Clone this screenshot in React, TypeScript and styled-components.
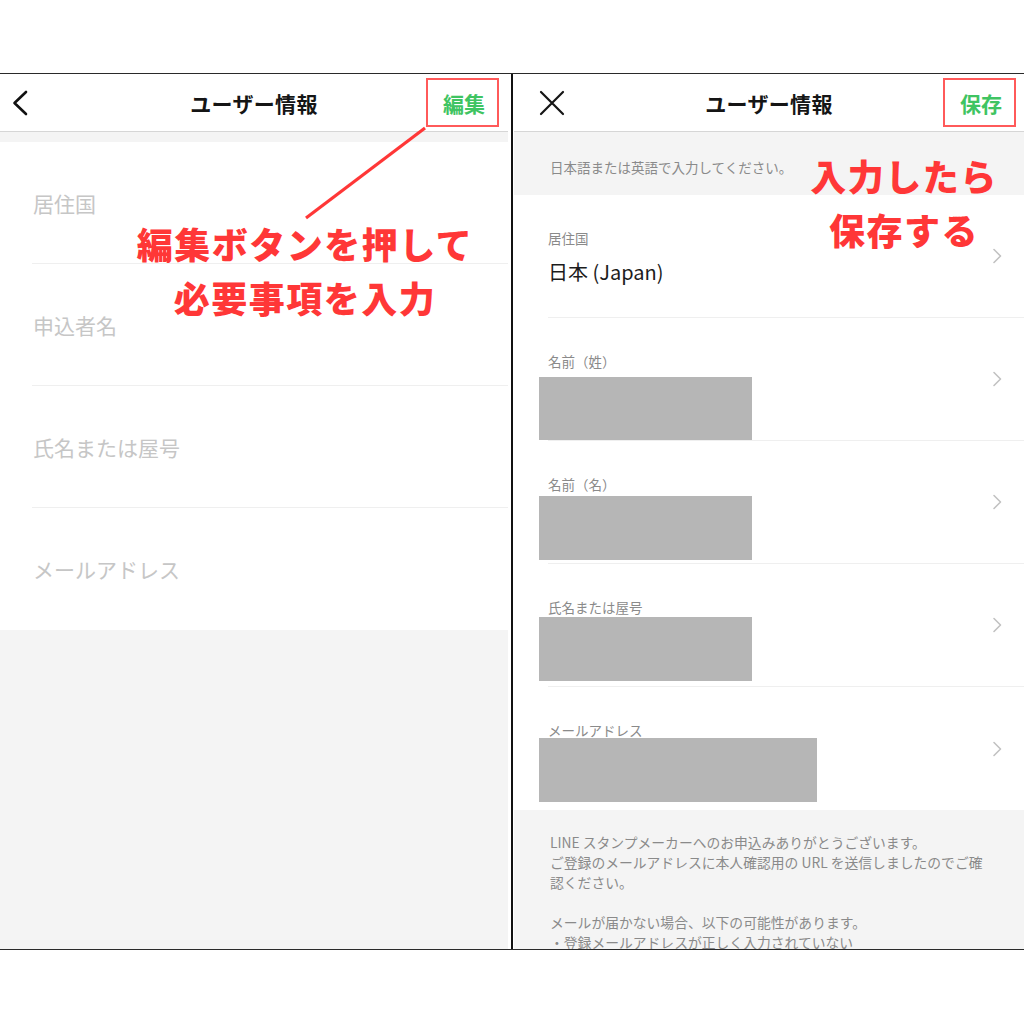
import React from 'react';
import styled, { createGlobalStyle } from 'styled-components';

const GlobalStyle = createGlobalStyle`
  html, body {
    margin: 0;
    padding: 0;
    background: #ffffff;
  }
  body {
    font-family: "Noto Sans CJK JP", "Noto Sans", sans-serif;
    color: #1a1a1a;
  }
`;

const Stage = styled.div`
  position: relative;
  width: 1024px;
  height: 1024px;
  padding-top: 73px;
  box-sizing: border-box;
  overflow: hidden;
`;

const Frame = styled.div`
  display: flex;
  height: 877px;
  box-sizing: border-box;
  border-top: 1px solid #2a2a2a;
  border-bottom: 1px solid #2a2a2a;
`;

const Panel = styled.div<{ $width: number }>`
  display: flex;
  flex-direction: column;
  width: ${(p) => p.$width}px;
  flex-shrink: 0;
  background: #f4f4f4;
  overflow: hidden;

  & > * {
    flex-shrink: 0;
  }
`;

const Divider = styled.div`
  width: 2px;
  margin: 0 1px 0 3px;
  background: #111111;
  flex-shrink: 0;
`;

const Header = styled.div<{ $pad: number }>`
  display: grid;
  grid-template-columns: 1fr auto 1fr;
  align-items: center;
  height: 58px;
  box-sizing: border-box;
  padding: 0 ${(p) => p.$pad}px;
  background: #ffffff;
  border-bottom: 1px solid #d6d6d6;
`;

const IconSlot = styled.div<{ $inset: number }>`
  display: flex;
  align-items: center;
  justify-self: start;
  margin-left: ${(p) => p.$inset}px;
`;

const Title = styled.div`
  font-size: 21px;
  font-weight: 700;
  color: #151515;
  letter-spacing: 0.3px;
`;

const Action = styled.div`
  justify-self: end;
  display: flex;
  align-items: center;
  height: 49px;
  box-sizing: border-box;
  padding: 0 12px 0 15px;
  border: 2px solid #ff5a5a;
  color: #3fc462;
  font-size: 21px;
  font-weight: 700;
`;

const Spacer = styled.div<{ $height: number }>`
  height: ${(p) => p.$height}px;
`;

const Note = styled.div`
  height: 63px;
  box-sizing: border-box;
  padding: 27px 0 0 36px;
  font-size: 13.5px;
  line-height: 16px;
  color: #8a8a8a;
`;

const PlainList = styled.div`
  background: #ffffff;
`;

const PlainRow = styled.div<{ $last?: boolean }>`
  display: flex;
  align-items: center;
  height: 122px;
  box-sizing: border-box;
  margin-left: 32px;
  padding-left: 1px;
  border-bottom: ${(p) => (p.$last ? 'none' : '1px solid #efefef')};
  font-size: 21px;
  color: #c6c6c6;
`;

const FieldList = styled.div`
  background: #ffffff;
`;

const FieldRow = styled.div<{ $last?: boolean }>`
  display: flex;
  height: 123px;
  box-sizing: border-box;
  margin-left: 34px;
  border-bottom: ${(p) => (p.$last ? 'none' : '1px solid #efefef')};
`;

const FieldBody = styled.div`
  flex: 1;
  display: flex;
  flex-direction: column;
  align-items: flex-start;
  padding-top: 35px;
`;

const FieldLabel = styled.div`
  font-size: 13.5px;
  line-height: 16px;
  color: #8a8a8a;
`;

const FieldValue = styled.div`
  margin-top: 14px;
  font-size: 20px;
  line-height: 24px;
  color: #1c1c1c;
`;

const Redacted = styled.div<{ $offset: number; $width: number }>`
  margin: ${(p) => p.$offset}px 0 0 -9px;
  width: ${(p) => p.$width}px;
  height: 64px;
  background: #b6b6b6;
`;

const ChevronSlot = styled.div`
  display: flex;
  align-items: center;
  padding-right: 22px;
`;

const Footer = styled.div`
  padding: 22px 0 0 36px;
  font-size: 13.8px;
  line-height: 20px;
  color: #8a8a8a;
  white-space: nowrap;
`;

const FooterLine = styled.div<{ $gap?: boolean }>`
  margin-top: ${(p) => (p.$gap ? '20px' : '0')};
`;

const Callout = styled.div<{ $left: number; $top: number; $width: number }>`
  position: absolute;
  left: ${(p) => p.$left}px;
  top: ${(p) => p.$top}px;
  width: ${(p) => p.$width}px;
  text-align: center;
  font-size: 36px;
  line-height: 54px;
  font-weight: 900;
  letter-spacing: 1.5px;
  color: #ff3737;
  white-space: nowrap;
`;

const Overlay = styled.svg`
  position: absolute;
  left: 0;
  top: 0;
  pointer-events: none;
`;

const BackIcon = () => (
  <svg width="18" height="28" viewBox="0 0 18 28">
    <path d="M15 3 L3.5 14 L15 25" fill="none" stroke="#111" strokeWidth="2.6" strokeLinecap="round" strokeLinejoin="round" />
  </svg>
);

const CloseIcon = () => (
  <svg width="26" height="26" viewBox="0 0 26 26">
    <path d="M2 2 L24 24 M24 2 L2 24" fill="none" stroke="#151515" strokeWidth="2.2" strokeLinecap="round" />
  </svg>
);

const Chevron = () => (
  <svg width="10" height="16" viewBox="0 0 10 16">
    <path d="M2 1.5 L8.5 8 L2 14.5" fill="none" stroke="#c2c2c2" strokeWidth="1.6" strokeLinecap="round" strokeLinejoin="round" />
  </svg>
);

const placeholders = ['居住国', '申込者名', '氏名または屋号', 'メールアドレス'];

const redactedFields = [
  { label: '名前（姓）', offset: 8, width: 213 },
  { label: '名前（名）', offset: 4, width: 213 },
  { label: '氏名または屋号', offset: 2, width: 213 },
  { label: 'メールアドレス', offset: 0, width: 278 },
];

const App: React.FC = () => (
  <>
    <GlobalStyle />
    <Stage>
      <Frame>
        <Panel $width={508}>
          <Header $pad={9}>
            <IconSlot $inset={2}>
              <BackIcon />
            </IconSlot>
            <Title>ユーザー情報</Title>
            <Action>編集</Action>
          </Header>
          <Spacer $height={10} />
          <PlainList>
            {placeholders.map((text, i) => (
              <PlainRow key={text} $last={i === placeholders.length - 1}>
                {text}
              </PlainRow>
            ))}
          </PlainList>
        </Panel>
        <Divider />
        <Panel $width={510}>
          <Header $pad={8}>
            <IconSlot $inset={17}>
              <CloseIcon />
            </IconSlot>
            <Title>ユーザー情報</Title>
            <Action>保存</Action>
          </Header>
          <Note>日本語または英語で入力してください。</Note>
          <FieldList>
            <FieldRow>
              <FieldBody>
                <FieldLabel>居住国</FieldLabel>
                <FieldValue>日本 (Japan)</FieldValue>
              </FieldBody>
              <ChevronSlot>
                <Chevron />
              </ChevronSlot>
            </FieldRow>
            {redactedFields.map((field, i) => (
              <FieldRow key={field.label} $last={i === redactedFields.length - 1}>
                <FieldBody>
                  <FieldLabel>{field.label}</FieldLabel>
                  <Redacted $offset={field.offset} $width={field.width} />
                </FieldBody>
                <ChevronSlot>
                  <Chevron />
                </ChevronSlot>
              </FieldRow>
            ))}
          </FieldList>
          <Footer>
            <FooterLine>LINE スタンプメーカーへのお申込みありがとうございます。</FooterLine>
            <FooterLine>ご登録のメールアドレスに本人確認用の URL を送信しましたのでご確</FooterLine>
            <FooterLine>認ください。</FooterLine>
            <FooterLine $gap>メールが届かない場合、以下の可能性があります。</FooterLine>
            <FooterLine>・登録メールアドレスが正しく入力されていない</FooterLine>
          </Footer>
        </Panel>
      </Frame>

      <Overlay width="1024" height="1024" viewBox="0 0 1024 1024">
        <line x1="425" y1="128" x2="306" y2="218" stroke="#ff3737" strokeWidth="3.2" />
      </Overlay>
      <Callout $left={105} $top={216} $width={400}>
        編集ボタンを押して
        <br />
        必要事項を入力
      </Callout>
      <Callout $left={804} $top={148} $width={200}>
        入力したら
        <br />
        保存する
      </Callout>
    </Stage>
  </>
);

export default App;
